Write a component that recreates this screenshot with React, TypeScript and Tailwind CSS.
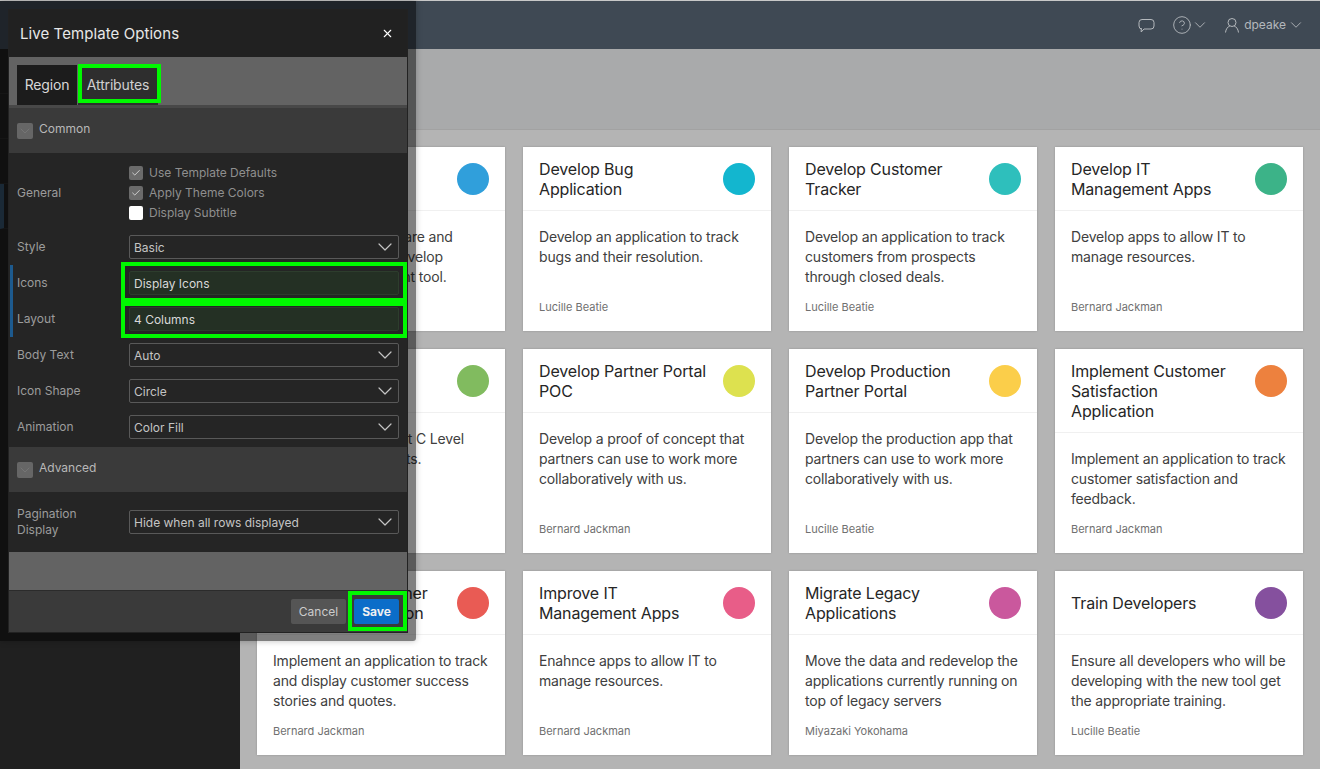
import { ChevronDown, CircleHelp, Check, X } from 'lucide-react'

interface CardItem {
  title: string
  body: string
  author: string
  color: string
}

const cards: CardItem[] = [
  { title: 'Research Tools', body: 'Research new software and select one to help develop portfolio management tool.', author: 'Lucille Beatie', color: 'bg-[#309fdb]' },
  { title: 'Develop Bug Application', body: 'Develop an application to track bugs and their resolution.', author: 'Lucille Beatie', color: 'bg-[#13b6cf]' },
  { title: 'Develop Customer Tracker', body: 'Develop an application to track customers from prospects through closed deals.', author: 'Lucille Beatie', color: 'bg-[#2ebfbc]' },
  { title: 'Develop IT Management Apps', body: 'Develop apps to allow IT to manage resources.', author: 'Bernard Jackman', color: 'bg-[#3cb388]' },
  { title: 'Executive Views', body: 'Build a report to meet C Level management requests.', author: 'Bernard Jackman', color: 'bg-[#81bb5f]' },
  { title: 'Develop Partner Portal POC', body: 'Develop a proof of concept that partners can use to work more collaboratively with us.', author: 'Bernard Jackman', color: 'bg-[#dde14f]' },
  { title: 'Develop Production Partner Portal', body: 'Develop the production app that partners can use to work more collaboratively with us.', author: 'Lucille Beatie', color: 'bg-[#fbce4a]' },
  { title: 'Implement Customer Satisfaction Application', body: 'Implement an application to track customer satisfaction and feedback.', author: 'Bernard Jackman', color: 'bg-[#ed813e]' },
  { title: 'Implement Customer Success Application', body: 'Implement an application to track and display customer success stories and quotes.', author: 'Bernard Jackman', color: 'bg-[#e95b54]' },
  { title: 'Improve IT Management Apps', body: 'Enahnce apps to allow IT to manage resources.', author: 'Bernard Jackman', color: 'bg-[#e85d88]' },
  { title: 'Migrate Legacy Applications', body: 'Move the data and redevelop the applications currently running on top of legacy servers', author: 'Miyazaki Yokohama', color: 'bg-[#ca589d]' },
  { title: 'Train Developers', body: 'Ensure all developers who will be developing with the new tool get the appropriate training.', author: 'Lucille Beatie', color: 'bg-[#85509e]' },
]

function Card({ item }: { item: CardItem }) {
  return (
    <div className="flex flex-col bg-white shadow-[0_0_2px_rgba(0,0,0,0.2)]">
      <div className="flex items-start justify-between border-b border-[#f0f0f0] pl-4 pr-4 pt-3 pb-[11px]">
        <div className="flex min-h-10 w-[172px] items-center text-base leading-5 tracking-[-0.01em] text-[#262626]">{item.title}</div>
        <div className={`mt-1 h-8 w-8 shrink-0 rounded-full ${item.color}`} />
      </div>
      <div className="flex flex-1 flex-col justify-between px-4 pt-4 pb-4">
        <p className="text-sm leading-5 tracking-[-0.0115em] text-[#404040]">{item.body}</p>
        <p className="mt-3 text-[11px] leading-4 text-[#707070]">{item.author}</p>
      </div>
    </div>
  )
}

function TopBar() {
  return (
    <div className="flex h-[49px] shrink-0 items-center justify-end border-t border-[#c8c8c8] bg-[#3f4954] pr-[15px] text-[#b4b8bc]">
      <svg width="18" height="16" viewBox="0 0 18 16" fill="none" stroke="currentColor" strokeWidth="1" className="mr-[17px] mt-px">
        <path d="M5 1.5h9a3 3 0 0 1 3 3v3.5a3 3 0 0 1-3 3H7l-2.800 3v-3H5a3 3 0 0 1-3-3V4.500a3 3 0 0 1 3-3z" />
      </svg>
      <CircleHelp size={20} strokeWidth={1.1} />
      <ChevronDown size={18} strokeWidth={1.2} className="-ml-px mr-[15px]" />
      <svg width="16" height="16" viewBox="0 0 16 16" fill="none" stroke="currentColor" strokeWidth="1">
        <circle cx="8" cy="5.500" r="4" />
        <path d="M1.500 15.500c.3-3.500 2.500-6 4.300-6.500M14.500 15.500c-.3-3.500-2.500-6-4.300-6.500" />
      </svg>
      <span className="ml-1 text-xs">dpeake</span>
      <ChevronDown size={18} strokeWidth={1.2} className="ml-px" />
    </div>
  )
}

function SideNav() {
  return (
    <div className="w-60 shrink-0 bg-[#202020]">
      <div className="h-[45px] border-b border-[#2a2a2a]" />
      <div className="h-[45px] border-b border-[#2a2a2a]" />
      <div className="h-[45px] border-b border-[#2a2a2a]" />
      <div className="h-[45px] border-b border-l-4 border-[#2a2a2a] border-l-[#35526c]" />
    </div>
  )
}

function SectionHeader({ label }: { label: string }) {
  return (
    <div className="flex h-[45px] items-start gap-1.5 bg-[#3a3a3a] pl-2 pt-[15px]">
      <div className="flex h-4 w-4 items-center justify-center rounded-[2px] bg-[#666666]">
        <ChevronDown size={16} strokeWidth={1} className="text-[#7d7d7d]" />
      </div>
      <span className="-mt-[2px] text-xs leading-4 text-[#b8b8b8]">{label}</span>
    </div>
  )
}

function CheckRow({ label, checked }: { label: string; checked: boolean }) {
  return (
    <div className="flex h-5 items-center gap-1.5">
      <div className={`flex h-[14px] w-[14px] items-center justify-center rounded-[2px] ${checked ? 'bg-[#6b6b6b]' : 'bg-white'}`}>
        {checked && <Check size={10} strokeWidth={1.6} className="text-white" />}
      </div>
      <span className="text-xs text-[#8f8f8f]">{label}</span>
    </div>
  )
}

function SelectBox({ value, changed, chevron = true }: { value: string; changed?: boolean; chevron?: boolean }) {
  return (
    <div className={`flex h-6 w-[270px] items-center justify-between rounded-[2px] border pl-[4px] pr-px text-xs ${changed ? 'border-[#2d3d2d] bg-[#243024] text-[#d8d8d8]' : 'border-[#595959] text-[#c4c4c4]'}`}>
      <span className="pt-px">{value}</span>
      {chevron && <ChevronDown size={24} strokeWidth={1.2} className="text-[#c4c4c4]" />}
    </div>
  )
}

function OptionRow({ label, value, changed }: { label: string; value: string; changed?: boolean }) {
  return (
    <div className="relative flex h-9 items-center pl-2">
      {changed && <div className="absolute left-px top-0 bottom-0 w-[3px] bg-[#1d5a8e]" />}
      <span className="w-28 text-xs text-[#9c9c9c]">{label}</span>
      <SelectBox value={value} changed={changed} chevron={!changed} />
    </div>
  )
}

function TemplateOptionsDialog() {
  return (
    <div className="absolute left-0 top-px h-[640px] w-[416px] rounded-br-[3px] border-8 border-black/50 shadow-[0_0_6px_rgba(0,0,0,0.25)] [background-clip:padding-box]">
      <div className="relative flex h-full flex-col border border-[#222222] bg-[#252525]">
        <div className="flex h-[47px] shrink-0 items-center justify-between bg-[#212121] pl-[11px] pr-[13px]">
          <span className="pt-0.5 text-[15px] tracking-[0.005em] text-[#e8e8e8]">Live Template Options</span>
          <X size={13} strokeWidth={2} className="-mt-px text-white" />
        </div>

        <div className="flex h-12 shrink-0 items-end gap-px bg-[#636363] pl-2">
          <div className="flex h-10 w-[60px] items-center justify-center bg-[#1c1c1c] text-sm tracking-[-0.0115em] text-[#d8d8d8]">Region</div>
          <div className="flex h-10 w-20 items-center justify-center bg-[#2e2e2e] text-sm tracking-[-0.0115em] text-[#d0d0d0]">Attributes</div>
        </div>
        <div className="h-[3px] shrink-0 bg-[#484848]" />

        <SectionHeader label="Common" />

        <div className="flex h-[76px] shrink-0 items-start pl-2 pt-[10px]">
          <span className="mt-[22px] w-28 text-xs leading-4 text-[#9c9c9c]">General</span>
          <div className="flex flex-col">
            <CheckRow label="Use Template Defaults" checked />
            <CheckRow label="Apply Theme Colors" checked />
            <CheckRow label="Display Subtitle" checked={false} />
          </div>
        </div>

        <OptionRow label="Style" value="Basic" />
        <OptionRow label="Icons" value="Display Icons" changed />
        <OptionRow label="Layout" value="4 Columns" changed />
        <OptionRow label="Body Text" value="Auto" />
        <OptionRow label="Icon Shape" value="Circle" />
        <OptionRow label="Animation" value="Color Fill" />
        <div className="h-[2px] shrink-0" />

        <SectionHeader label="Advanced" />

        <div className="flex h-[60px] shrink-0 items-center pl-2">
          <span className="w-28 text-xs leading-4 text-[#9c9c9c]">Pagination<br />Display</span>
          <SelectBox value="Hide when all rows displayed" />
        </div>

        <div className="h-[38px] shrink-0 bg-[#636363]" />

        <div className="flex flex-1 items-center justify-end gap-2 border-t border-[#2b2b2b] bg-[#3a3a3a] pr-2">
          <button className="h-[25px] w-[55px] rounded-[2px] bg-[#555555] text-xs text-[#cccccc]">Cancel</button>
          <button className="h-[25px] w-[45px] rounded-[2px] bg-[#0b6dc9] text-xs font-bold text-[#f0f0f0]">Save</button>
        </div>

        {/* green callouts drawn over the dialog */}
        <div className="absolute left-[69px] top-[54px] h-[39px] w-[83px] border-4 border-[#00f900]" />
        <div className="absolute left-[112px] top-[252px] h-10 w-[286px] border-4 border-[#00f900]" />
        <div className="absolute left-[112px] top-[292px] h-9 w-[286px] border-4 border-[#00f900]" />
        <div className="absolute left-[339px] top-[581px] h-10 w-[59px] border-4 border-[#00f900]" />
      </div>
    </div>
  )
}

export default function App() {
  return (
    <div className="relative flex h-[769px] w-[1320px] flex-col overflow-hidden font-['Inter',sans-serif]">
      <TopBar />
      <div className="flex min-h-0 flex-1">
        <SideNav />
        <div className="flex min-w-0 flex-1 flex-col bg-[#b4b4b4]">
          <div className="h-[81px] shrink-0 border-b border-[#a2a2a2] bg-[#a9aaab]" />
          <div className="grid grid-cols-4 gap-[18px] px-[17px] pt-[17px]">
            {cards.map(item => (
              <Card key={item.title} item={item} />
            ))}
          </div>
        </div>
      </div>
      <TemplateOptionsDialog />
    </div>
  )
}
